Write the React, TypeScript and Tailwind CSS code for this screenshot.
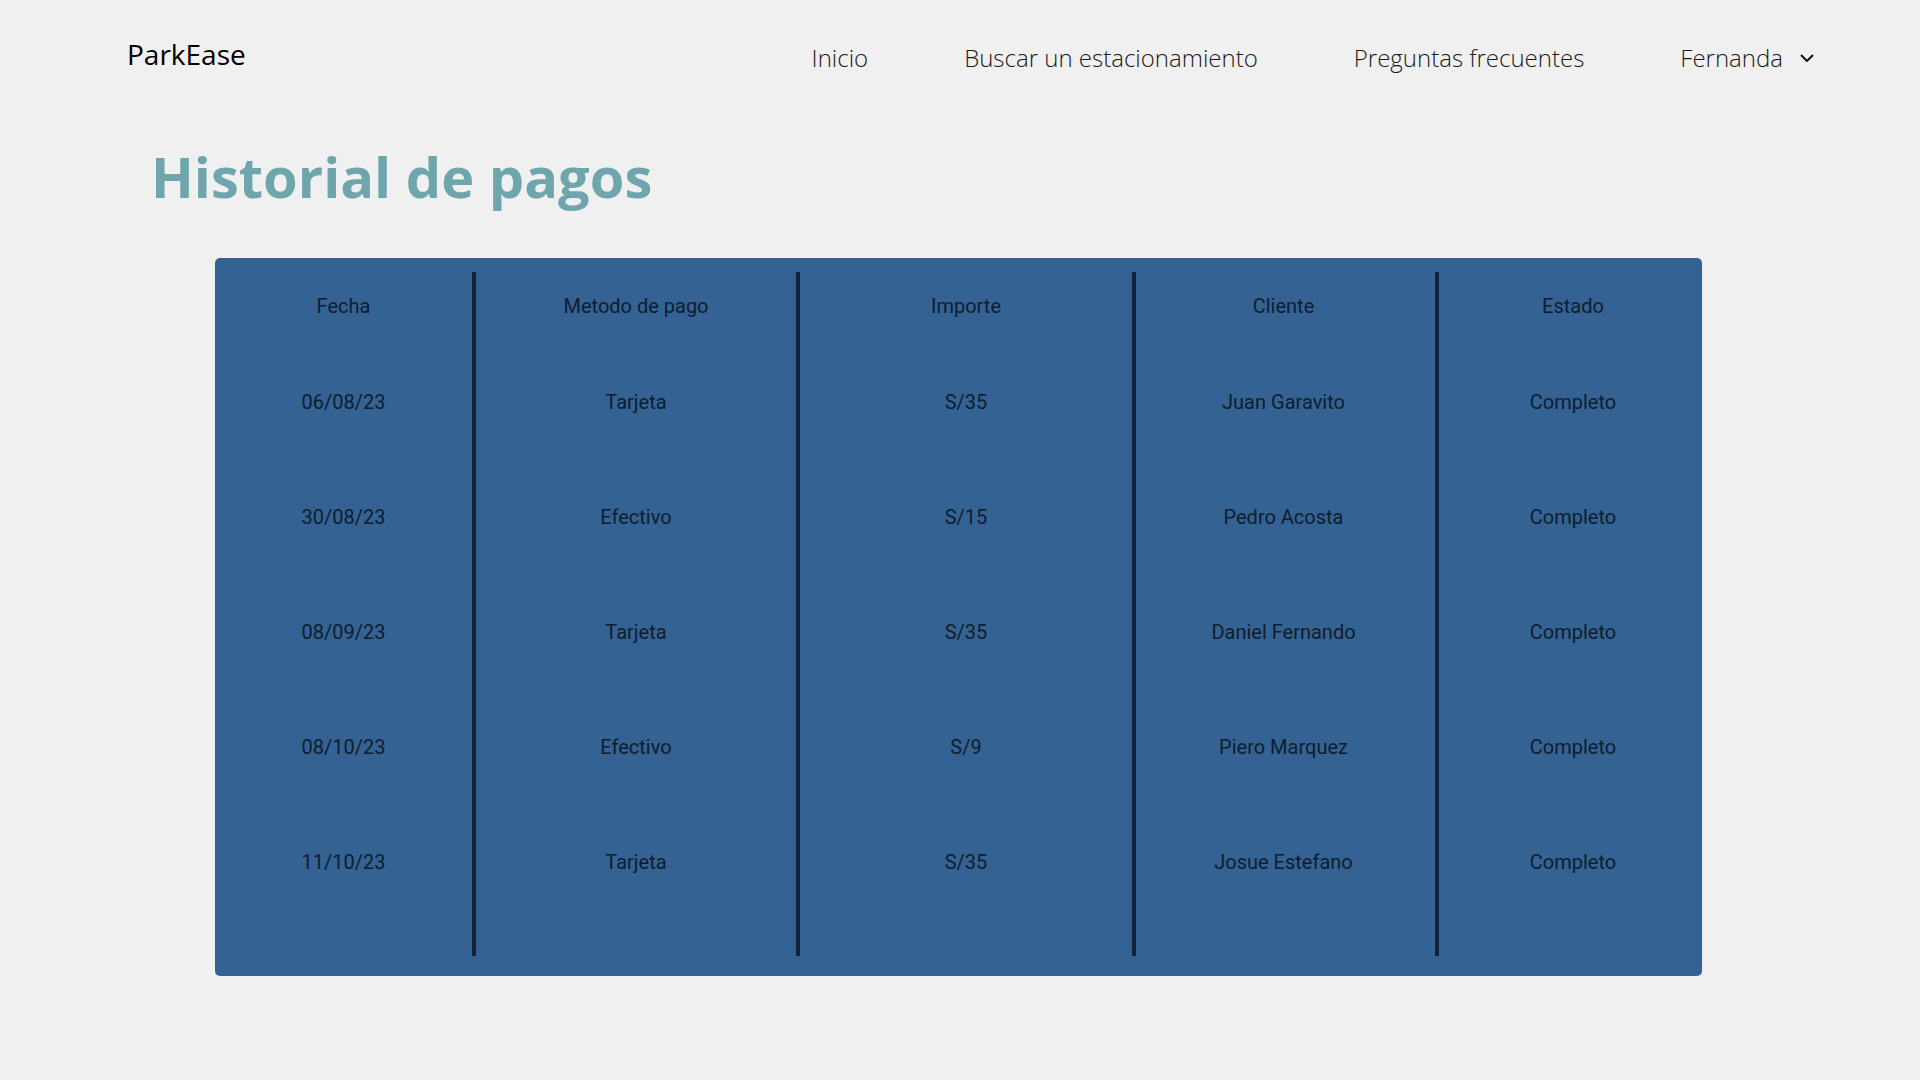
const columns = [
  { title: "Fecha", width: "w-[257px]", values: ["06/08/23", "30/08/23", "08/09/23", "08/10/23", "11/10/23"] },
  { title: "Metodo de pago", width: "w-[324px]", values: ["Tarjeta", "Efectivo", "Tarjeta", "Efectivo", "Tarjeta"] },
  { title: "Importe", width: "w-[336px]", values: ["S/35", "S/15", "S/35", "S/9", "S/35"] },
  { title: "Cliente", width: "w-[303px] pr-[4px]", values: ["Juan Garavito", "Pedro Acosta", "Daniel Fernando", "Piero Marquez", "Josue Estefano"] },
  { title: "Estado", width: "flex-1 pl-[5px]", values: ["Completo", "Completo", "Completo", "Completo", "Completo"] },
];

export default function App() {
  return (
    <div className="min-h-screen bg-[#f0f0f0] font-['Open_Sans',sans-serif]">
      {/* Top navigation */}
      <header className="flex items-start justify-between pl-[127px] pr-[106px] pt-[33px]">
        <div className="text-[28px] font-medium text-black">ParkEase</div>
        <nav className="mt-[7px] flex items-center gap-[96px] text-[24px] font-light text-[#1a1a1a]">
          <a href="#">Inicio</a>
          <a href="#">Buscar un estacionamiento</a>
          <a href="#">Preguntas frecuentes</a>
          <button className="flex items-center gap-[17px]">
            <span>Fernanda</span>
            <svg width="14" height="8" viewBox="0 0 14 8" fill="none">
              <polyline points="1,1 7,7 13,1" stroke="#111" strokeWidth="2" />
            </svg>
          </button>
        </nav>
      </header>

      <main className="pl-[151px]">
        <h1 className="mt-[72px] text-[56px] font-bold leading-none text-[#6fa6ad]">Historial de pagos</h1>

        {/* Payments table */}
        <div className="ml-[64px] mt-[54px] flex w-[1487px] rounded-[5px] bg-[#336293] pb-[20px] pt-[14px] font-['Roboto',sans-serif] text-[20px] text-[#0f1d2e]">
          {columns.map((col, i) => (
            <div
              key={col.title}
              className={`${col.width} flex flex-col pb-[37px] ${i > 0 ? "border-l-4 border-[#11233a]" : ""}`}
            >
              <div className="flex h-[72px] justify-center pt-[22px] leading-[24px]">{col.title}</div>
              {col.values.map((v, r) => (
                <div key={r} className="flex h-[115px] items-center justify-center leading-[24px]">
                  {v}
                </div>
              ))}
            </div>
          ))}
        </div>
      </main>
    </div>
  );
}
